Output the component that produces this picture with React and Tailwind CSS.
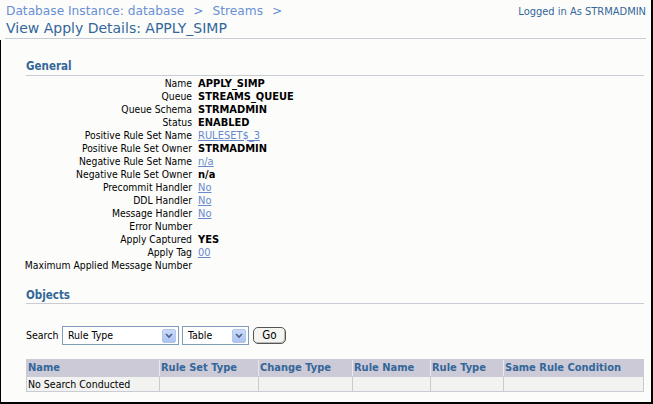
import React from "react";

const rows = [
  { label: "Name", value: "APPLY_SIMP", kind: "bold" },
  { label: "Queue", value: "STREAMS_QUEUE", kind: "bold" },
  { label: "Queue Schema", value: "STRMADMIN", kind: "bold" },
  { label: "Status", value: "ENABLED", kind: "bold" },
  { label: "Positive Rule Set Name", value: "RULESET$_3", kind: "link" },
  { label: "Positive Rule Set Owner", value: "STRMADMIN", kind: "bold" },
  { label: "Negative Rule Set Name", value: "n/a", kind: "link" },
  { label: "Negative Rule Set Owner", value: "n/a", kind: "bold" },
  { label: "Precommit Handler", value: "No", kind: "link" },
  { label: "DDL Handler", value: "No", kind: "link" },
  { label: "Message Handler", value: "No", kind: "link" },
  { label: "Error Number", value: "", kind: "bold" },
  { label: "Apply Captured", value: "YES", kind: "bold" },
  { label: "Apply Tag", value: "00", kind: "link" },
  { label: "Maximum Applied Message Number", value: "", kind: "bold" },
];

const columns = [
  { name: "Name", w: "w-[132px]" },
  { name: "Rule Set Type", w: "w-[99px]" },
  { name: "Change Type", w: "w-[94px]" },
  { name: "Rule Name", w: "w-[78px]" },
  { name: "Rule Type", w: "w-[73px]" },
  { name: "Same Rule Condition", w: "flex-1" },
];

function Arrow() {
  return (
    <span className="w-[14px] h-[14px] rounded-[2px] bg-gradient-to-b from-[#c9d9fb] to-[#adc4f2] border border-[#b3c6ec] flex items-center justify-center">
      <svg width="8" height="6" viewBox="0 0 8 6">
        <path d="M1 1 L4 4 L7 1" fill="none" stroke="#4d6185" strokeWidth="1.6" />
      </svg>
    </span>
  );
}

function Select({ label, width }) {
  return (
    <div className={`${width} h-[19px] border border-[#7f9db9] bg-white flex items-center justify-between pl-[5px] pr-[2px]`}>
      <span className="text-[10.5px]">{label}</span>
      <Arrow />
    </div>
  );
}

export default function App() {
  return (
    <div className="w-[653px] h-[404px] bg-[#fcfdfb] border-r-2 border-b-2 border-black overflow-hidden text-[11px] text-black font-['Tahoma','DejaVu_Sans_Condensed','DejaVu_Sans',sans-serif]">
      {/* Header */}
      <div className="h-[40px] pl-[5px] pr-[5px]">
        <div className="flex justify-between items-start pt-[3px] pl-[1px]">
          <div className="text-[12.2px] leading-[16px] text-[#6a8fd4] font-['DejaVu_Sans',sans-serif]">
            Database Instance: database<span className="mx-[9px]">&gt;</span>Streams<span className="ml-[9px]">&gt;</span>
          </div>
          <div className="text-[11px] leading-[14px] pt-[2px] text-[#336699]">Logged in As STRMADMIN</div>
        </div>
        <div className="text-[14px] leading-[17px] text-[#336699] pl-[1px] pt-[1px] font-['DejaVu_Sans',sans-serif]">
          View Apply Details: APPLY_SIMP
        </div>
        <div className="h-px bg-[#c9ccd4] mt-[1px]" />
      </div>

      {/* Body */}
      <div className="h-[364px] border-l border-black pl-[25px] pr-[7px]">
        <div className="pt-[19px] text-[11.5px] leading-[15px] font-bold text-[#336699]">General</div>
        <div className="h-px bg-[#c9ccd4] mt-[1px]" />

        <div className="mt-[1px] flex flex-col">
          {rows.map((r) => (
            <div key={r.label} className="flex h-[13px] items-center leading-[13px] whitespace-nowrap">
              <div className="w-[166px] flex justify-end text-[10.3px]">
                <span>{r.label}</span>
              </div>
              <div className="pl-[6px]">
                {r.kind === "link" ? (
                  <span className="text-[#6688cc] underline">{r.value}</span>
                ) : (
                  <span className="font-bold">{r.value}</span>
                )}
              </div>
            </div>
          ))}
        </div>

        <div className="pt-[16px] text-[11.5px] leading-[15px] font-bold text-[#336699]">Objects</div>
        <div className="h-px bg-[#c9ccd4]" />

        <div className="mt-[22px] flex items-center">
          <span className="text-[10.5px] w-[36px]">Search</span>
          <Select label="Rule Type" width="w-[117px]" />
          <div className="w-[3px]" />
          <Select label="Table" width="w-[67px]" />
          <div className="w-[4px]" />
          <button className="h-[17px] w-[33px] rounded-[5px] border border-[#555] bg-[#f4f4f0] text-[11.5px] leading-[15px] shadow-[inset_-1px_-1px_0_#bbb]">
            Go
          </button>
        </div>

        <div className="mt-[14px] border border-[#c9ccd4]">
          <div className="flex h-[16px] bg-[#cbcad6]">
            {columns.map((c, i) => (
              <div
                key={c.name}
                className={`${c.w} ${i > 0 ? "border-l border-[#e8e8ee]" : ""} pl-[1px] font-bold text-[#336699] leading-[16px] whitespace-nowrap`}
              >
                {c.name}
              </div>
            ))}
          </div>
          <div className="flex h-[15px] bg-[#f2f3f1] border-t border-[#c9ccd4]">
            {columns.map((c, i) => (
              <div
                key={c.name}
                className={`${c.w} ${i > 0 ? "border-l border-[#c9ccd4]" : ""} pl-[1px] leading-[14px] text-[10.5px]`}
              >
                {i === 0 ? "No Search Conducted" : ""}
              </div>
            ))}
          </div>
        </div>
      </div>
    </div>
  );
}
